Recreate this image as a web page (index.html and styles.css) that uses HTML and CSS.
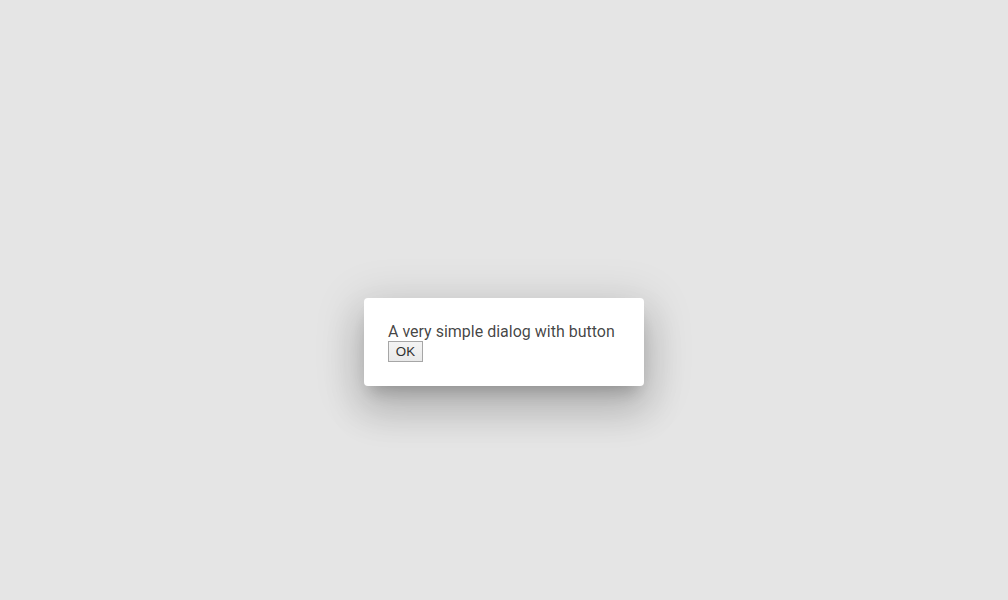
FILE: index.html
```html
<!DOCTYPE html>
<html>
<head>
<meta charset="utf-8">
<link rel="stylesheet" href="styles.css">
</head>
<body>
<div class="overlay">
  <div class="dialog">
    <div class="message">A very simple dialog with button</div>
    <button class="ok">OK</button>
  </div>
</div>
</body>
</html>
```
FILE: styles.css
```css
html, body {
  margin: 0;
  padding: 0;
  height: 100%;
  background: #e5e5e5;
}
.overlay {
  display: flex;
  justify-content: center;
  align-items: flex-start;
  padding-top: 298px;
}
.dialog {
  width: 232px;
  padding: 24px;
  background: #fff;
  border-radius: 4px;
  font-family: Roboto, "Liberation Sans", sans-serif;
  font-size: 16px;
  color: rgba(0, 0, 0, 0.74);
  box-shadow: 0 11px 15px -7px rgba(0,0,0,.2), 0 24px 38px 3px rgba(0,0,0,.14), 0 9px 46px 8px rgba(0,0,0,.12);
}
.message {
  line-height: 19px;
}
.ok {
  display: block;
  box-sizing: border-box;
  height: 21px;
  width: 35px;
  padding: 1px 6px;
  border: 1px solid #a6a6a6;
  border-radius: 0;
  background: linear-gradient(#f4f4f4, #e9e9e9);
  font-family: "Liberation Sans", Arial, sans-serif;
  font-size: 13.333px;
  color: #303030;
}
```
